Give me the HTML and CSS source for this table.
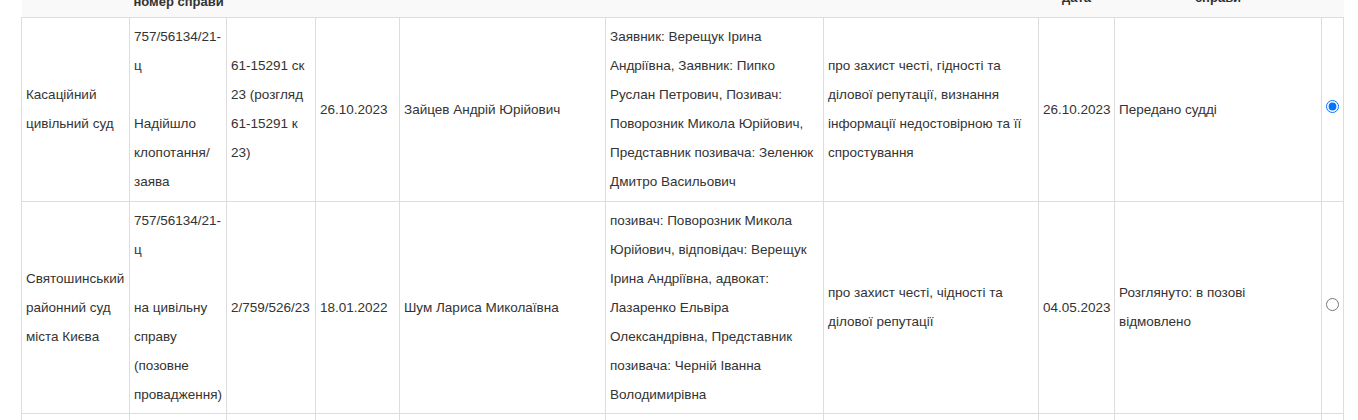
FILE: index.html
```html
<!DOCTYPE html>
<html lang="uk">
<head>
<meta charset="utf-8">
<title>Справи</title>
<link rel="stylesheet" href="styles.css">
</head>
<body>
<div class="page">
  <table class="cases">
    <colgroup>
      <col class="c-court">
      <col class="c-num">
      <col class="c-proc">
      <col class="c-date">
      <col class="c-judge">
      <col class="c-parties">
      <col class="c-subject">
      <col class="c-date2">
      <col class="c-state">
      <col class="c-pick">
    </colgroup>
    <thead>
      <tr>
        <th>Найменування суду</th>
        <th class="th-low">Єдиний унікальний номер&nbsp;справи</th>
        <th>Номер провадження</th>
        <th>Дата надходження</th>
        <th>Склад суду</th>
        <th>Сторони</th>
        <th>Суть позову</th>
        <th class="th-low th-lift">Остання дата</th>
        <th class="th-low th-lift">Стан розгляду<br>справи</th>
        <th></th>
      </tr>
    </thead>
    <tbody>
      <tr>
        <td>Касаційний цивільний суд</td>
        <td>757/56134/21-ц<br><br>Надійшло клопотання/ заява</td>
        <td>61-15291 ск 23 (розгляд 61-15291 к 23)</td>
        <td class="date">26.10.2023</td>
        <td>Зайцев Андрій Юрійович</td>
        <td>Заявник: Верещук Ірина Андріївна, Заявник: Пипко Руслан Петрович, Позивач: Поворозник Микола Юрійович, Представник позивача: Зеленюк Дмитро Васильович</td>
        <td>про захист честі, гідності та ділової репутації, визнання інформації недостовірною та її спростування</td>
        <td class="date">26.10.2023</td>
        <td>Передано судді</td>
        <td class="pick"><input type="radio" name="case" checked></td>
      </tr>
      <tr>
        <td>Святошинський районний суд міста Києва</td>
        <td>757/56134/21-ц<br><br>на цивільну справу (позовне провадження)</td>
        <td>2/759/526/23</td>
        <td class="date">18.01.2022</td>
        <td>Шум Лариса Миколаївна</td>
        <td>позивач: Поворозник Микола Юрійович, відповідач: Верещук Ірина Андріївна, адвокат: Лазаренко Ельвіра Олександрівна, Представник позивача: Черній Іванна Володимирівна</td>
        <td>про захист честі, чідності та ділової репутації</td>
        <td class="date">04.05.2023</td>
        <td>Розглянуто: в позові<br>відмовлено</td>
        <td class="pick"><input type="radio" name="case"></td>
      </tr>
      <tr>
        <td>Печерський районний суд міста Києва</td>
        <td>757/56134/21-ц</td>
        <td>2/757/1021/22</td>
        <td class="date">20.12.2021</td>
        <td>Бусик Олег Леонідович</td>
        <td>позивач: Поворозник Микола Юрійович</td>
        <td>про захист честі, гідності та ділової репутації</td>
        <td class="date">12.04.2022</td>
        <td>Передано за підсудністю</td>
        <td class="pick"><input type="radio" name="case"></td>
      </tr>
    </tbody>
  </table>
</div>
</body>
</html>
```

FILE: styles.css
```css
html, body {
  margin: 0;
  padding: 0;
  background: #fff;
}

body {
  font-family: "Liberation Sans", Arial, sans-serif;
  font-size: 13.5px;
  color: #333;
}

.page {
  padding-left: 21px;
  margin-top: -47px;
}

.cases {
  width: 1323px;
  table-layout: fixed;
  border-collapse: collapse;
  border-spacing: 0;
}

.c-court { width: 108px; }
.c-num { width: 97px; }
.c-proc { width: 89px; }
.c-date { width: 84px; }
.c-judge { width: 206px; }
.c-parties { width: 218px; }
.c-subject { width: 215px; }
.c-date2 { width: 76px; }
.c-state { width: 207px; }
.c-pick { width: 22px; }

.cases th {
  background: #f9f9f9;
  font-size: 13px;
  font-weight: bold;
  text-align: center;
  vertical-align: top;
  line-height: 18px;
  padding: 4px 4px 6px;
  border: 0;
  border-bottom: 1px solid #ddd;
}

.cases th.th-low {
  vertical-align: bottom;
}

.cases th.th-lift {
  padding-bottom: 10px;
}

.cases td {
  border: 1px solid #ddd;
  padding: 4px;
  line-height: 29.1px;
  vertical-align: middle;
  text-align: left;
  overflow-wrap: break-word;
}

.cases td.date {
  white-space: nowrap;
}

.cases td.pick {
  padding: 4px 0;
}

.pick input {
  display: block;
  margin: 0 auto 6px;
  width: 13px;
  height: 13px;
}
```
